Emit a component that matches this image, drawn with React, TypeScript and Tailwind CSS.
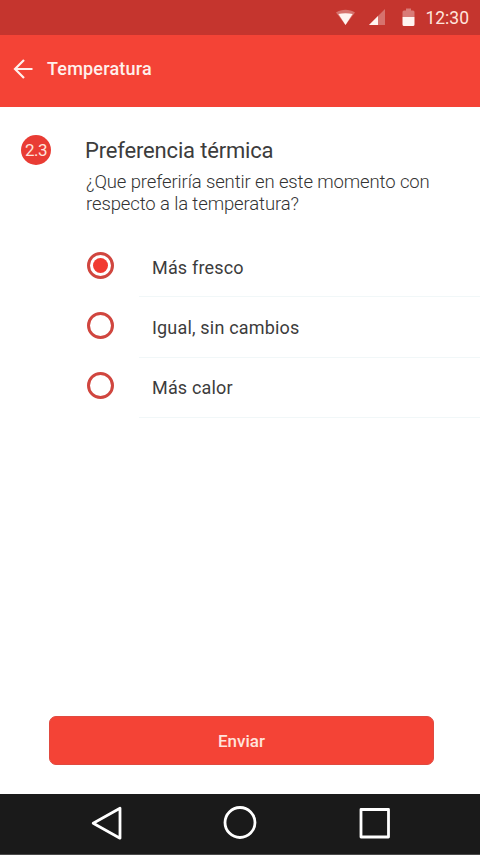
const OPTIONS = [
  { id: "fresco", label: "Más fresco" },
  { id: "igual", label: "Igual, sin cambios" },
  { id: "calor", label: "Más calor" },
]

const SELECTED = "fresco"

function StatusBar() {
  return (
    <div className="flex h-[35px] items-center justify-end bg-[#c5352e] pr-[11px] text-white">
      <svg width="19" height="17" viewBox="0 0 19 17" className="mr-[13px]" aria-hidden>
        <path d="M0 3.5C5.5 -0.3 13.5 -0.3 19 3.5L9.5 16Z" fill="#fff" fillOpacity="0.3" />
        <path d="M2.4 5C6.5 4 12.5 4 16.6 5L9.5 16Z" fill="#fff4f0" />
      </svg>
      <svg width="18" height="17" viewBox="0 0 18 17" className="mr-[16px]" aria-hidden>
        <path d="M17 0V16H1Z" fill="#fff" fillOpacity="0.3" />
        <path d="M10 7V16H1Z" fill="#fff4f0" />
      </svg>
      <svg width="13" height="19" viewBox="0 0 13 19" className="mr-[10px]" aria-hidden>
        <path d="M4 0.5H9V2.5H11A1.5 1.5 0 0 1 12.5 4V9H0.5V4A1.5 1.5 0 0 1 2 2.5H4Z" fill="#fff" fillOpacity="0.35" />
        <path d="M0.5 9H12.5V16.5A1.5 1.5 0 0 1 11 18H2A1.5 1.5 0 0 1 0.5 16.5Z" fill="#fff4f0" />
      </svg>
      <span className="pt-[2px] text-[17.5px] leading-none text-[#ffe4dc]">12:30</span>
    </div>
  )
}

function AppBar() {
  return (
    <header className="flex h-[72px] items-center bg-[#f44336] pb-[5px] pl-[13px] text-[#fff0ec]">
      <svg width="20" height="20" viewBox="0 0 20 20" fill="none" stroke="currentColor" strokeWidth="2.2" aria-hidden>
        <path d="M19.5 10H2M11 1L2 10L11 19" />
      </svg>
      <h1 className="ml-[14px] text-[18px] leading-none font-medium tracking-[0.2px]">Temperatura</h1>
    </header>
  )
}

function Radio({ checked }: { checked: boolean }) {
  return (
    <span className="mb-[4px] flex size-[27px] shrink-0 items-center justify-center rounded-full border-[3px] border-[#d0463f]">
      {checked && <span className="size-[15px] rounded-full bg-[#f13a31]" />}
    </span>
  )
}

function NavBar() {
  return (
    <nav className="flex h-[61px] items-center justify-between border-b border-[#4a4a4a] bg-[#1a1a1a] pr-[89px] pb-[2px] pl-[90px]">
      <svg width="33" height="36" viewBox="0 0 33 36" fill="none" stroke="#fff" strokeWidth="2.8" strokeLinejoin="round" aria-hidden>
        <path d="M30 3.3V33.2L3.2 18.3Z" />
      </svg>
      <svg width="36" height="34" viewBox="0 0 36 34" fill="none" stroke="#fff" strokeWidth="2.8" aria-hidden>
        <circle cx="17" cy="16.5" r="15" />
      </svg>
      <svg width="32" height="32" viewBox="0 0 32 32" fill="none" stroke="#fff" strokeWidth="2.8" strokeLinejoin="round" aria-hidden>
        <rect x="2" y="2.5" width="27.5" height="27.5" />
      </svg>
    </nav>
  )
}

export default function App() {
  return (
    <div className="flex h-[855px] w-[480px] flex-col overflow-hidden bg-white font-['Roboto',sans-serif]">
      <StatusBar />
      <AppBar />

      <main className="flex flex-1 flex-col">
        <section className="flex pt-[28px] pl-[21px]">
          <div className="flex size-[30px] items-center justify-center rounded-full bg-[#e93c34] pt-px text-[17px] leading-none tracking-[-0.5px] text-[#ffe4dc]">
            2.3
          </div>
          <div className="ml-[34px]">
            <h2 className="pt-px text-[22px] leading-[30px] tracking-[-0.17px] text-[#3c3c3c]">Preferencia térmica</h2>
            <p className="mt-[5px] ml-px text-[18.5px] leading-[22px] font-light tracking-[-0.12px] whitespace-nowrap text-[#333]">
              ¿Que preferiría sentir en este momento con
              <br />
              respecto a la temperatura?
            </p>
          </div>
        </section>

        <ul className="mt-[22px]">
          {OPTIONS.map((o) => (
            <li key={o.id} className="flex h-[60.3px] items-center pl-[87px]">
              <Radio checked={o.id === SELECTED} />
              <span className="ml-[25px] flex h-full flex-1 items-center border-b border-[#f1f7f8] pt-px pl-[13px] text-[18px] tracking-[0.18px] text-[#3c3c3c]">
                {o.label}
              </span>
            </li>
          ))}
        </ul>

        <button className="mt-auto mb-[29px] ml-[49px] h-[49px] w-[385px] rounded-[7px] border border-[#e04a40] bg-[#f44336] pt-[2px] text-[17px] leading-none font-medium text-[#ffe4dc]">
          Enviar
        </button>
      </main>

      <NavBar />
    </div>
  )
}
